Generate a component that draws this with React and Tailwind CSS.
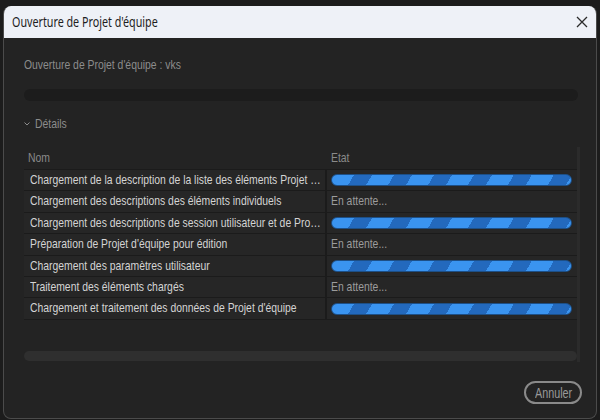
import React from "react";

const rows = [
  { name: "Chargement de la description de la liste des éléments Projet d'équipe", busy: true },
  { name: "Chargement des descriptions des éléments individuels", busy: false },
  { name: "Chargement des descriptions de session utilisateur et de Projet d'équipe", busy: true },
  { name: "Préparation de Projet d'équipe pour édition", busy: false },
  { name: "Chargement des paramètres utilisateur", busy: true },
  { name: "Traitement des éléments chargés", busy: false },
  { name: "Chargement et traitement des données de Projet d'équipe", busy: true },
];

const sans = { fontFamily: '"Liberation Sans", Arial, sans-serif' };

// Narrow label: the UI face is a condensed one, so glyphs are squeezed horizontally.
function Narrow({ children, className = "scale-x-[0.77]" }) {
  return <span className={"inline-block origin-left whitespace-nowrap " + className}>{children}</span>;
}

function StripeBar() {
  return (
    <div className="h-[12px] w-[241px] rounded-full border border-[#1d4f86] bg-[repeating-linear-gradient(120deg,#3a94f0_0px,#3a94f0_19px,#2369bd_19px,#2369bd_34.6px)]" />
  );
}

export default function App() {
  return (
    <div className="w-[600px] h-[420px] bg-[#1c1c1c] overflow-hidden pt-[6px] pl-[3px]" style={sans}>
      <div className="w-[594px] h-[413px] rounded-[8px] border border-t-0 border-[#4b4b4b] bg-[#232323] flex flex-col overflow-hidden">
        {/* title bar */}
        <div className="h-[32px] bg-[#eef1f7] flex items-center justify-between pl-[8px] pr-[8px]">
          <span className="text-[14.5px] text-[#1e1e1e]" style={{ fontFamily: '"Noto Sans", sans-serif' }}>
            <Narrow className="scale-x-[0.74]">Ouverture de Projet d'équipe</Narrow>
          </span>
          <svg width="12" height="12" viewBox="0 0 12 12">
            <path d="M1 1 L11 11 M11 1 L1 11" stroke="#2b2b2b" strokeWidth="1.3" fill="none" />
          </svg>
        </div>

        <div className="flex flex-col px-[20px]">
          <div className="mt-[18px] text-[13.5px] text-[#8c8c8c] leading-[17px]">
            <Narrow>Ouverture de Projet d'équipe : vks</Narrow>
          </div>
          <div className="mt-[16px] h-[12px] w-[554px] rounded-full bg-[#1c1c1c]" />
          <div className="mt-[14px] flex items-center gap-[5px] text-[13.5px] text-[#8c8c8c] leading-[17px]">
            <svg width="6" height="4" viewBox="0 0 6 4">
              <path d="M0.5 0.5 L3 3 L5.5 0.5" stroke="#8c8c8c" strokeWidth="1" fill="none" />
            </svg>
            <Narrow>Détails</Narrow>
          </div>

          {/* table */}
          <div className="mt-[15px] w-[556px] h-[215px] border-r-[3px] border-[#2b2b2b] flex flex-col">
            <div className="h-[22px] flex items-center text-[13.5px] text-[#8a8a8a]">
              <div className="w-[303px] pl-[4px]"><Narrow>Nom</Narrow></div>
              <div className="pl-[4px]"><Narrow>Etat</Narrow></div>
            </div>
            <div className="flex flex-col gap-px bg-[#1b1b1b] py-px w-[553px]">
              {rows.map((r, i) => (
                <div key={i} className="h-[20.4px] flex gap-[2px]">
                  <div className="w-[301px] bg-[#262626] pl-[6px] flex items-center text-[13.5px] text-[#d4d4d4] overflow-hidden">
                    <span className="block w-[380px] shrink-0 origin-left scale-x-[0.77] truncate">{r.name}</span>
                  </div>
                  <div className="flex-1 bg-[#262626] pl-[4px] flex items-center">
                    {r.busy ? (
                      <StripeBar />
                    ) : (
                      <span className="text-[13.5px] text-[#9c9c9c]"><Narrow>En attente...</Narrow></span>
                    )}
                  </div>
                </div>
              ))}
            </div>
            <div className="flex-1" />
            <div className="mb-[1px] h-[10px] w-[553px] rounded-full bg-[#2f2f2f]" />
          </div>
        </div>

        <div className="mt-[19px] flex justify-end pr-[14px]">
          <button className="w-[58px] h-[23px] rounded-full border-2 border-[#8a8a8a] text-[14px] text-[#9a9a9a] leading-none flex items-center pl-[9px]">
            <Narrow>Annuler</Narrow>
          </button>
        </div>
      </div>
    </div>
  );
}
